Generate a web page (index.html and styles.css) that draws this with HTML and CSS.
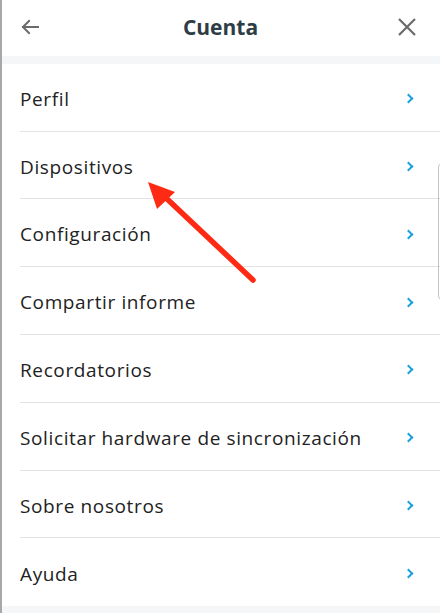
FILE: index.html
```html
<!DOCTYPE html>
<html lang="es">
<head>
<meta charset="utf-8">
<link rel="stylesheet" href="styles.css">
</head>
<body>
<div class="screen">
  <header class="topbar">
    <button class="icon-btn" aria-label="Atrás">
      <svg width="20" height="20" viewBox="0 0 20 20"><path d="M18 10H3M9 4L3 10l6 6" fill="none" stroke="#6b6b6b" stroke-width="2" stroke-linecap="square"/></svg>
    </button>
    <h1 class="title">Cuenta</h1>
    <button class="icon-btn" aria-label="Cerrar">
      <svg width="20" height="20" viewBox="0 0 20 20"><path d="M2 2L18 18M18 2L2 18" fill="none" stroke="#6b6b6b" stroke-width="2.2"/></svg>
    </button>
  </header>
  <div class="band"></div>
  <ul class="menu">
    <li class="item"><span>Perfil</span><span class="chev"></span></li>
    <li class="item"><span>Dispositivos</span><span class="chev"></span></li>
    <li class="item"><span>Configuración</span><span class="chev"></span></li>
    <li class="item"><span>Compartir informe</span><span class="chev"></span></li>
    <li class="item"><span>Recordatorios</span><span class="chev"></span></li>
    <li class="item"><span>Solicitar hardware de sincronización</span><span class="chev"></span></li>
    <li class="item"><span>Sobre nosotros</span><span class="chev"></span></li>
    <li class="item"><span>Ayuda</span><span class="chev"></span></li>
  </ul>
  <div class="band bottom"></div>
  <div class="edge-frame"></div>
  <svg class="annotation" width="440" height="613" viewBox="0 0 440 613">
    <line x1="253" y1="280" x2="165" y2="197" stroke="#ff2a14" stroke-width="5.5" stroke-linecap="round"/>
    <polygon points="148,182 175,192 157,209" fill="#ff2a14"/>
  </svg>
</div>
</body>
</html>
```
FILE: styles.css
```css
* { box-sizing: border-box; margin: 0; padding: 0; }
html, body { background: #fff; }
body {
  width: 440px;
  height: 613px;
  overflow: hidden;
  font-family: "Open Sans", Lato, sans-serif;
}
.screen {
  position: relative;
  height: 613px;
  border-left: 2px solid #a8a8a8;
  display: flex;
  flex-direction: column;
}
.topbar {
  height: 58px;
  display: flex;
  align-items: center;
  justify-content: space-between;
  padding: 0 22px 0 17px;
}
.icon-btn {
  border: 0;
  background: none;
  width: 22px;
  height: 22px;
  display: flex;
  align-items: center;
  justify-content: center;
  margin-top: -2px;
}
.title {
  font-size: 21px;
  font-weight: 700;
  color: #2e3c45;
  margin-left: 4px;
  margin-top: -3px;
}
.band {
  height: 8px;
  background: #f5f6f8;
}
.band.bottom {
  height: 7px;
  margin-top: auto;
}
.menu { list-style: none; }
.item {
  height: 67.8px;
  margin-left: 18px;
  padding-right: 24px;
  padding-top: 3px;
  display: flex;
  align-items: center;
  justify-content: space-between;
  font-size: 19px;
  letter-spacing: 0.62px;
  color: #222;
  border-bottom: 1px solid #e2e2e2;
  position: relative;
}
.item:last-child { border-bottom: 0; }
.chev {
  width: 7px;
  height: 7px;
  border-top: 2.2px solid #1aa3e0;
  border-right: 2.2px solid #1aa3e0;
  transform: rotate(45deg);
  margin-right: 4px;
}
.edge-frame {
  position: absolute;
  left: 436px;
  top: 163px;
  width: 12px;
  height: 137px;
  border: 1px solid #c4c4c4;
  border-radius: 4px;
}
.annotation {
  position: absolute;
  left: -2px;
  top: 0;
  pointer-events: none;
}
```
